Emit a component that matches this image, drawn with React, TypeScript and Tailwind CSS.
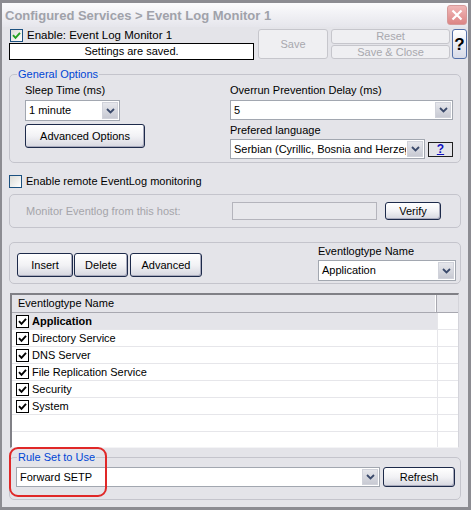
import type { ReactNode } from "react";

function Chevron() {
  return (
    <svg width="9" height="6" viewBox="0 0 9 6">
      <path d="M1 1l3.5 3.5L8 1" fill="none" stroke="#3b4a6b" strokeWidth="1.8" />
    </svg>
  );
}

function Check({ color }: { color: string }) {
  return (
    <svg width="9" height="9" viewBox="0 0 9 9">
      <path d="M1 4.2L3.5 6.8L8 1.8" fill="none" stroke={color} strokeWidth="1.9" />
    </svg>
  );
}

function Combo({ text, className = "" }: { text: string; className?: string }) {
  return (
    <div className={`flex items-stretch overflow-hidden border border-[#a2a7b0] bg-white ${className}`}>
      <span className="flex min-w-0 flex-1 items-center overflow-hidden whitespace-nowrap pl-[3px]">{text}</span>
      <span className="m-px flex w-[16px] shrink-0 items-center justify-center border border-[#d0d2da] bg-linear-to-b from-[#e6e7ec] to-[#c8cad3]">
        <Chevron />
      </span>
    </div>
  );
}

function Button({ children, className = "" }: { children: ReactNode; className?: string }) {
  return (
    <div
      className={`flex items-center justify-center rounded-[3px] border border-[#1d2a4a] bg-linear-to-b from-white via-[#f2f2f5] to-[#d6d7e0] shadow-[inset_-1px_-1px_0_#a9abbd] ${className}`}
    >
      {children}
    </div>
  );
}

function Disabled({ children, className = "" }: { children: ReactNode; className?: string }) {
  return (
    <div
      className={`flex items-center justify-center rounded-[3px] border border-[#c6c6cc] bg-[#efeff2] text-[#a8a8ae] ${className}`}
    >
      {children}
    </div>
  );
}

const rows = ["Application", "Directory Service", "DNS Server", "File Replication Service", "Security", "System", "", ""];

export default function App() {
  return (
    <div className="relative h-[510px] w-[471px] overflow-hidden border-t-[3px] border-r-[3px] border-b-[3px] border-l-2 border-[#8c8c92] bg-[#e4e4e9] font-['Liberation_Sans',Arial,sans-serif] text-[11px] leading-[13px] text-black">
      {/* title bar */}
      <div className="flex h-[24px] items-center justify-between bg-linear-to-b from-[#fbfbfd] to-[#e6e6ec]">
        <span className="pl-[3px] text-[13px] font-bold text-[#a0a2aa]">Configured Services &gt; Event Log Monitor 1</span>
        <div className="mr-px flex h-[20px] w-[20px] items-center justify-center rounded-[3px] border border-[#d69a9a] bg-linear-to-b from-[#f0b8b8] to-[#dc8585]">
          <svg width="12" height="12" viewBox="0 0 12 12">
            <path d="M1.5 1.5l9 9M10.5 1.5l-9 9" stroke="#fff" strokeWidth="2.2" />
          </svg>
        </div>
      </div>

      {/* top row */}
      <div className="mt-px flex h-[32px] pl-[7px]">
        <div className="flex w-[245px] flex-col">
          <div className="flex h-[15px] items-center">
            <span className="ml-px flex h-[13px] w-[13px] items-center justify-center border border-[#1c5180] bg-linear-to-br from-[#dcdcd7] to-white">
              <Check color="#21a121" />
            </span>
            <span className="ml-[4px] text-[11.5px]">Enable: Event Log Monitor 1</span>
          </div>
          <div className="flex h-[17px] items-center justify-center border border-black bg-white">Settings are saved.</div>
        </div>
        <Disabled className="ml-[4px] mt-px h-[30px] w-[70px]">Save</Disabled>
        <div className="ml-[3px] mt-px flex w-[119px] flex-col gap-px">
          <Disabled className="h-[15px]">Reset</Disabled>
          <Disabled className="h-[14px]">Save &amp; Close</Disabled>
        </div>
        <div className="ml-[2px] mt-px flex h-[30px] w-[15px] items-center justify-center rounded-[3px] border border-[#5470a8] bg-linear-to-b from-white to-[#d8dbe8] text-[17px] font-bold">
          ?
        </div>
      </div>

      {/* general options */}
      <fieldset className="ml-[7px] mt-[8px] w-[452px] rounded-[5px] border border-[#c4c4cc] pb-[3px]">
        <legend className="ml-[7px] px-px text-[#0046d5]">General Options</legend>
        <div className="flex pl-[15px] pt-[3px]">
          <div className="flex w-[205px] flex-col">
            <span>Sleep Time (ms)</span>
            <Combo text="1 minute" className="mt-[3px] h-[21px] w-[95px]" />
            <Button className="mt-[3px] h-[24px] w-[120px]">Advanced Options</Button>
          </div>
          <div className="flex w-[224px] flex-col">
            <span>Overrun Prevention Delay (ms)</span>
            <Combo text="5" className="mt-[3px] h-[20px] w-[223px]" />
            <span className="mt-[4px]">Prefered language</span>
            <div className="mt-[2px] flex items-center">
              <Combo text="Serbian (Cyrillic, Bosnia and Herzegovina)" className="h-[20px] w-[195px]" />
              <div className="ml-[3px] flex h-[15px] w-[25px] items-center justify-center border border-[#202020] text-[12px] font-bold text-[#1010c0] underline">
                ?
              </div>
            </div>
          </div>
        </div>
      </fieldset>

      {/* remote */}
      <div className="ml-[7px] mt-[11px] flex h-[14px] items-center">
        <span className="h-[13px] w-[13px] border border-[#1c5180] bg-linear-to-br from-[#dcdcd7] to-white" />
        <span className="ml-[4px]">Enable remote EventLog monitoring</span>
      </div>
      <div className="ml-[7px] mt-[6px] flex h-[34px] w-[452px] items-center rounded-[5px] border border-[#c4c4cc] pl-[16px]">
        <span className="w-[206px] text-[#a4a4aa]">Monitor Eventlog from this host:</span>
        <span className="h-[18px] w-[145px] border border-[#b4b4bc] bg-[#e8e8ec]" />
        <Button className="ml-[8px] h-[18px] w-[56px]">Verify</Button>
      </div>

      {/* buttons group */}
      <div className="ml-[7px] mt-[14px] flex h-[42px] w-[452px] rounded-[5px] border border-[#c4c4cc] pl-[7px]">
        <div className="mt-[10px] flex h-[24px]">
          <Button className="w-[56px]">Insert</Button>
          <Button className="ml-px w-[54px]">Delete</Button>
          <Button className="ml-[2px] w-[72px]">Advanced</Button>
        </div>
        <div className="ml-auto mr-[4px] flex w-[138px] flex-col pt-[2px]">
          <span>Eventlogtype Name</span>
          <Combo text="Application" className="mt-[2px] h-[21px]" />
        </div>
      </div>

      {/* list */}
      <div className="ml-[8px] mt-[9px] h-[155px] w-[449px] overflow-hidden border-t-2 border-r border-b border-l-2 border-t-[#808086] border-r-[#d4d4da] border-b-[#f4f4f6] border-l-[#808086] bg-white">
        <div className="flex h-[18px] border-b border-[#a8a8b0] bg-[#e4e4e9]">
          <div className="flex flex-1 items-center border-r border-[#a8a8b0] pl-[6px] shadow-[inset_-1px_0_0_#fff]">
            Eventlogtype Name
          </div>
          <div className="w-[21px]" />
        </div>
        {rows.map((r, i) => (
          <div key={i} className={`flex h-[17px] border-b border-[#e6e6ea] ${i === 0 ? "bg-[#e4e4e9]" : "bg-white"}`}>
            <div className="flex flex-1 items-center pl-[4px]">
              {r && (
                <>
                  <span className="flex h-[13px] w-[13px] items-center justify-center border border-black bg-white">
                    <Check color="#000" />
                  </span>
                  <span className={`ml-[3px] ${i === 0 ? "font-bold" : ""}`}>{r}</span>
                </>
              )}
            </div>
            <div className="w-[21px] border-l border-[#e6e6ea] bg-white" />
          </div>
        ))}
      </div>

      {/* rule set */}
      <fieldset className="ml-[7px] mt-[3px] w-[452px] rounded-[5px] border border-[#c4c4cc] pb-[12px]">
        <legend className="ml-[7px] px-px text-[#0046d5]">Rule Set to Use</legend>
        <div className="mt-[3px] flex pl-[6px]">
          <Combo text="Forward SETP" className="h-[20px] w-[364px]" />
          <Button className="ml-[3px] h-[20px] w-[72px]">Refresh</Button>
        </div>
      </fieldset>

      {/* annotation */}
      <div className="absolute left-[7px] top-[444px] h-[50px] w-[98px] rounded-[9px] border-2 border-[#e02828]" />
    </div>
  );
}
